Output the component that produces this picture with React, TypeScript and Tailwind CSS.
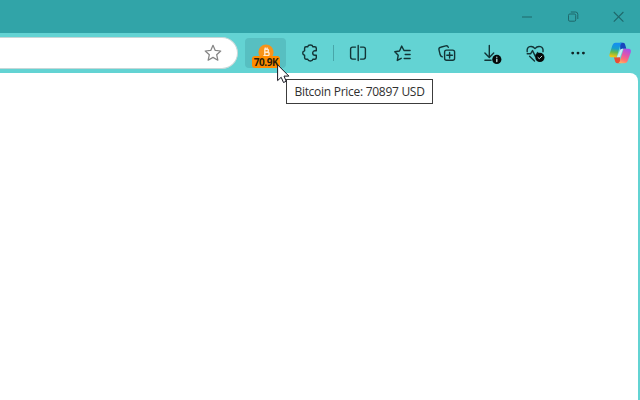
import React from "react";

function Icon({ children, className = "" }: { children: React.ReactNode; className?: string }) {
  return (
    <svg
      viewBox="0 0 24 24"
      className={`h-6 w-6 shrink-0 ${className}`}
      fill="none"
      stroke="#123436"
      strokeWidth="1.4"
      strokeLinecap="round"
      strokeLinejoin="round"
    >
      {children}
    </svg>
  );
}

function WindowControls() {
  return (
    <div className="flex h-[33px] items-center justify-end bg-[#31a4a8]">
      <div className="flex h-full w-[46px] items-center justify-center">
        <svg viewBox="0 0 12 12" className="h-3 w-3" fill="none" stroke="#1f686b">
          <path d="M1 6h10" />
        </svg>
      </div>
      <div className="flex h-full w-[46px] items-center justify-center">
        <svg viewBox="0 0 12 12" className="h-3 w-3" fill="none" stroke="#1f686b">
          <rect x="1.5" y="3" width="7.2" height="7.2" rx="1.3" />
          <path d="M3.8 1h4.7a2.3 2.3 0 0 1 2.3 2.3v4.7" />
        </svg>
      </div>
      <div className="flex h-full w-[44px] items-center justify-center">
        <svg viewBox="0 0 12 12" className="h-3 w-3" fill="none" stroke="#1f686b" strokeWidth="1.1">
          <path d="M1.8 1l9.6 9.6M11.4 1L1.8 10.6" />
        </svg>
      </div>
    </div>
  );
}

function BitcoinButton() {
  return (
    <div className="relative ml-[7px] flex h-[30px] w-[41px] shrink-0 justify-center rounded bg-[#57bfc1]">
      <svg viewBox="0 0 16 16" className="mt-[6px] h-4 w-4">
        <circle cx="8" cy="8" r="7.6" fill="#f7931a" />
        <path
          d="M6.2 5.2h2.8a1.5 1.5 0 0 1 0 3H6.6h2.9a1.7 1.7 0 0 1 0 3.4H5.4M6.8 5.2v6.4M7.3 3.6v1.6M9.1 3.6v1.6"
          fill="none"
          stroke="#ffe9cf"
          strokeWidth="1.4"
        />
      </svg>
      <div className="absolute top-[18px] left-[7px] flex h-[12px] w-[28px] items-center justify-center rounded-[3px] bg-[#ff8c00] font-['Open_Sans',sans-serif] text-[10px] leading-none font-bold tracking-[-0.4px] text-[#2a1c08]">
        70.9K
      </div>
    </div>
  );
}

function Copilot() {
  return (
    <svg viewBox="0 0 24 24" className="ml-[18px] h-6 w-6 shrink-0">
      <defs>
        <linearGradient id="cool" x1="0.45" y1="0" x2="0.3" y2="1">
          <stop offset="0.05" stopColor="#158ff0" />
          <stop offset="0.38" stopColor="#159fce" />
          <stop offset="0.65" stopColor="#62b94f" />
          <stop offset="0.95" stopColor="#f0c414" />
        </linearGradient>
        <linearGradient id="warm" x1="0.7" y1="0" x2="0.3" y2="1">
          <stop offset="0" stopColor="#a450ec" />
          <stop offset="0.45" stopColor="#e557a5" />
          <stop offset="0.75" stopColor="#ff746f" />
          <stop offset="1" stopColor="#ffad64" />
        </linearGradient>
      </defs>
      <path d="M12 1.8h3.1c1.3 0 1.8.8 2.1 1.9l1.1 4h-3.1c-1.5 0-2.4.5-2.9 1.8z" fill="#1746bd" />
      <path d="M12.5 22.2H9.2c-1.3 0-1.8-.8-2.1-1.9l-1.2-4.1h3.2c1.5 0 2.2-.5 2.7-1.8z" fill="#e84c35" />
      <path
        d="M14.8 1.8H7.7C5.6 1.8 4.7 3.4 4 5.5L1.5 13.2C.9 15.2 1.8 16.3 3.8 16.3h4.8L12.3 4.3c.5-1.6 1.1-2.5 2.5-2.5z"
        fill="url(#cool)"
      />
      <path
        d="M9.4 22.2h7.1c2.1 0 3-1.6 3.7-3.7l2.5-7.1c.7-2.2-.1-3.7-2.3-3.7h-4.8L12 19.7c-.5 1.6-1.2 2.5-2.6 2.5z"
        fill="url(#warm)"
      />
      <path d="M12.4 8.4c.4-.5 1.4-.7 2.7-.7L12 16.3H8.8z" fill="#c4eeee" />
    </svg>
  );
}

function Toolbar() {
  return (
    <div className="flex h-10 items-center bg-[#63d3d3]">
      <div className="flex h-8 w-[238px] shrink-0 items-center justify-end rounded-r-full border-y border-r border-[#c6d7d7] bg-white pr-[12px]">
        <svg viewBox="0 0 24 24" className="h-6 w-6" fill="none" stroke="#858585" strokeWidth="1.25" strokeLinejoin="round">
          <path d="M12 4.3l2.25 5.1 5.5.6-4.1 3.7 1.2 5.5L12 16.4l-4.85 2.8 1.2-5.5-4.1-3.7 5.5-.6z" />
        </svg>
      </div>
      <BitcoinButton />
      <Icon className="ml-[12px]">
        <path d="M8 5.8h1.7c.4-2.4 4.8-2.4 5.2 0h1.9a1.5 1.5 0 0 1 1.5 1.5v2.4H17a2.3 2.3 0 0 0 0 4.6h1.3v2.4a1.5 1.5 0 0 1-1.5 1.5h-1.9c-.4 2.4-4.8 2.4-5.2 0H8a1.4 1.4 0 0 1-1.4-1.4v-2.5c-2.5-.4-2.5-4.2 0-4.6V7.3A1.5 1.5 0 0 1 8 5.8z" />
      </Icon>
      <div className="ml-[11px] h-4 w-px shrink-0 bg-[#48a6a9]" />
      <Icon className="ml-[12px]">
        <path d="M9.5 6.1H6.6a2 2 0 0 0-2 2v8a2 2 0 0 0 2 2h2.9M14.5 6.1h2.9a2 2 0 0 1 2 2v8a2 2 0 0 1-2 2h-2.9M12.2 4.5v15" />
      </Icon>
      <Icon className="ml-[21px]">
        <path d="M10.2 17.3l-3.9 2.1.9-5.1L3.8 10.7l4.7-.7 2.2-4.9 2.3 4.4h6.1M14.2 13.5h4.9M13.2 17.5h5.9" />
      </Icon>
      <Icon className="ml-[20px]">
        <rect x="9.6" y="9.1" width="10" height="10.2" rx="2" />
        <path d="M14.6 11.4v5.6M11.8 14.2h5.6M7.2 15.8c-1.1-.2-1.7-1-2-2L4 8.8c-.3-1.3.4-2.2 1.6-2.5l5.1-1.4c1.4-.4 2.2.3 2.6 1.5" />
      </Icon>
      <Icon className="ml-[21px]">
        <path d="M9.3 4.5v11.7M4.9 12l4.4 4.4 4.4-4.4M4.9 19.2h6.2" />
        <circle cx="16.8" cy="18.4" r="4.6" fill="#050909" stroke="none" />
        <path d="M16.8 18.2v2.3M16.8 16.2v.1" stroke="#b6dada" />
      </Icon>
      <Icon className="ml-[19px]">
        <path d="M4.2 10.7C3.4 5 9.1 4 12 7.6 15 4 20.8 5 20 10.7M6.6 15.3L11.5 20M4.2 12.8h3.4l1.9-3.2 2.9 5.8 2.2-3.8 1 1.4" />
        <circle cx="16.9" cy="16.4" r="4.6" fill="#050909" stroke="none" />
        <path d="M15 16.5l1.3 1.2 2.5-2.5" stroke="#b6dada" strokeWidth="1" />
      </Icon>
      <Icon className="ml-[19px]">
        <g fill="#102426" stroke="none">
          <circle cx="6.7" cy="12.1" r="1.45" />
          <circle cx="12" cy="12.1" r="1.45" />
          <circle cx="17.4" cy="12.1" r="1.45" />
        </g>
      </Icon>
      <Copilot />
    </div>
  );
}

export default function App() {
  return (
    <div className="relative flex h-[400px] w-[640px] flex-col overflow-hidden bg-[#63d3d3]">
      <WindowControls />
      <Toolbar />
      <div className="mr-[2px] flex-1 rounded-tr-lg bg-white" />
      <div className="absolute top-[79px] left-[286px] flex h-[25px] w-[147px] items-center justify-center border border-[#3c3c3c] bg-white font-['Open_Sans',sans-serif] text-[12px] leading-none tracking-[-0.28px] whitespace-nowrap text-[#303030]">
        Bitcoin Price: 70897 USD
      </div>
      <svg viewBox="0 0 13 20" className="absolute top-[64px] left-[277px] h-5 w-[13px]">
        <path d="M.6.8v15.8l3.6-3.3 2.3 5.2 2.7-1.2L7 12.1h4.9z" fill="#fff" stroke="#15151f" />
      </svg>
    </div>
  );
}
